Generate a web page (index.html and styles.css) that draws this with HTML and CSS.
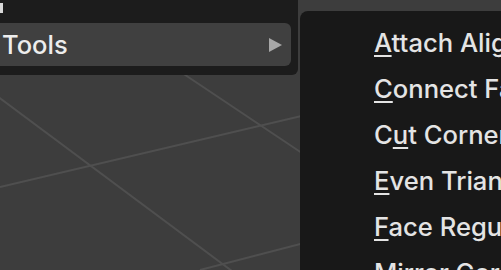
FILE: index.html
```html
<!DOCTYPE html>
<html>
<head>
<meta charset="utf-8">
<link rel="stylesheet" href="styles.css">
</head>
<body>
<svg class="grid" width="501" height="270" viewBox="0 0 501 270">
  <line x1="-50" y1="61" x2="240" y2="277" />
  <line x1="0" y1="187" x2="501" y2="69" />
  <line x1="100" y1="18" x2="420" y2="232" />
  <line x1="200" y1="270" x2="501" y2="192" />
</svg>
<div class="menu">
  <div class="stub"></div>
  <div class="item active">
    <span class="label">Tools</span>
    <span class="arrow"></span>
  </div>
</div>
<div class="submenu">
  <div class="sub-item"><u>A</u>ttach Align</div>
  <div class="sub-item"><u>C</u>onnect Faces</div>
  <div class="sub-item">C<u>u</u>t Corner</div>
  <div class="sub-item"><u>E</u>ven Triangles</div>
  <div class="sub-item"><u>F</u>ace Regular</div>
  <div class="sub-item">Mirror Corner</div>
</div>
</body>
</html>
```
FILE: styles.css
```css
html, body {
  margin: 0;
  padding: 0;
}
body {
  width: 501px;
  height: 270px;
  overflow: hidden;
  position: relative;
  background: #3d3d3d;
  font-family: Inter, "Noto Sans", "DejaVu Sans", sans-serif;
}
.grid {
  position: absolute;
  left: 0;
  top: 0;
}
.grid line {
  stroke: #4f4f4f;
  stroke-width: 2;
}
.menu {
  position: absolute;
  left: 0;
  top: 0;
  width: 298px;
  height: 75px;
  background: #1c1c1c;
  border-bottom-right-radius: 6px;
  box-sizing: border-box;
  padding-top: 23px;
  padding-right: 7px;
}
.stub {
  position: absolute;
  left: 0;
  top: 3px;
  width: 3px;
  height: 10px;
  background: #d8d8d8;
}
.item {
  height: 43px;
  display: flex;
  align-items: center;
  justify-content: space-between;
  border-radius: 0 6px 6px 0;
  padding-left: 2px;
  padding-right: 9px;
}
.item.active {
  background: #404040;
}
.label {
  color: #ededed;
  font-size: 25.5px;
  font-weight: 500;
  line-height: 1;
  padding-top: 1px;
}
.arrow {
  width: 0;
  height: 0;
  border-top: 7px solid transparent;
  border-bottom: 7px solid transparent;
  border-left: 13px solid #a8a8a8;
}
.submenu {
  position: absolute;
  left: 300px;
  top: 11px;
  width: 240px;
  height: 300px;
  background: #181818;
  border-top-left-radius: 8px;
  padding-top: 16px;
  box-sizing: border-box;
}
.sub-item {
  height: 46px;
  padding-left: 74px;
  color: #e4e4e4;
  font-size: 25.6px;
  font-weight: 500;
  line-height: 32px;
  white-space: nowrap;
}
.sub-item u {
  text-decoration-thickness: 2px;
  text-underline-offset: 3px;
}
```
